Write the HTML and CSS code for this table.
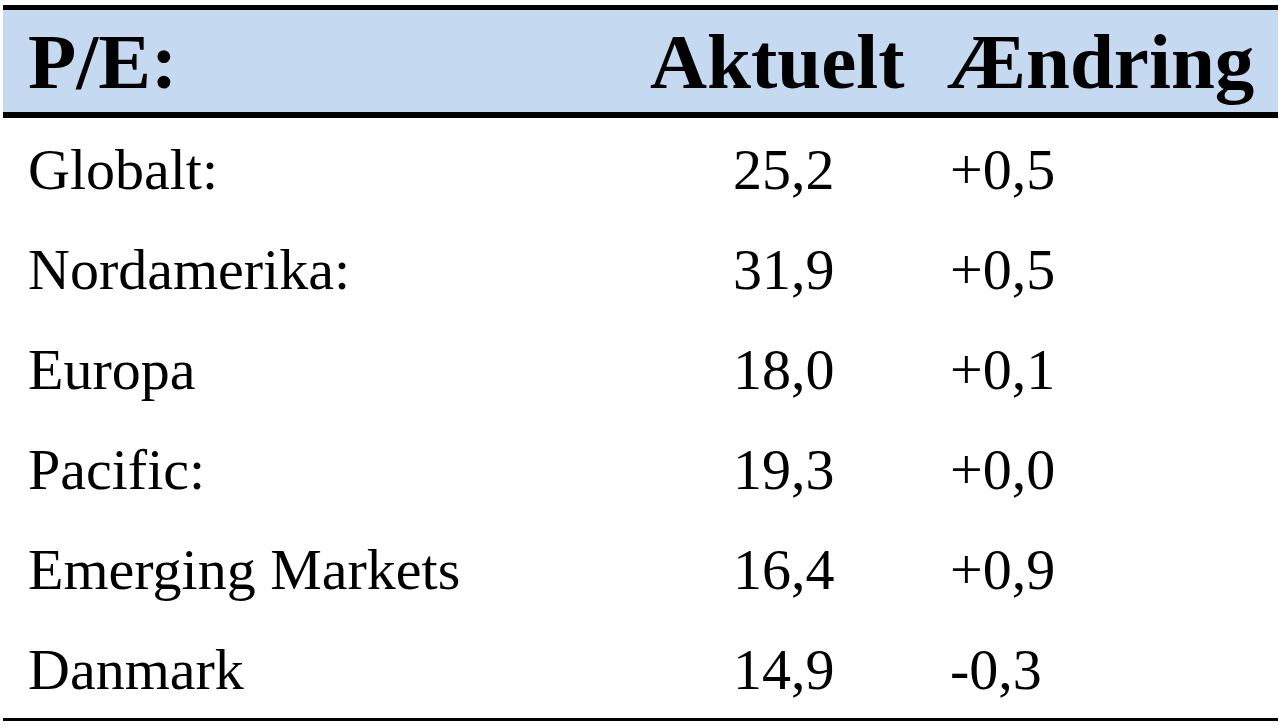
FILE: index.html
```html
<!DOCTYPE html>
<html lang="da">
<head>
<meta charset="utf-8">
<title>P/E</title>
<link rel="stylesheet" href="styles.css">
</head>
<body>
<div class="table">
  <div class="row head">
    <div class="c1">P/E:</div>
    <div class="c2">Aktuelt</div>
    <div class="c3">Ændring</div>
  </div>
  <div class="row"><div class="c1">Globalt:</div><div class="c2 v">25,2</div><div class="c3">+0,5</div></div>
  <div class="row"><div class="c1">Nordamerika:</div><div class="c2 v">31,9</div><div class="c3">+0,5</div></div>
  <div class="row"><div class="c1">Europa</div><div class="c2 v">18,0</div><div class="c3">+0,1</div></div>
  <div class="row"><div class="c1">Pacific:</div><div class="c2 v">19,3</div><div class="c3">+0,0</div></div>
  <div class="row"><div class="c1">Emerging Markets</div><div class="c2 v">16,4</div><div class="c3">+0,9</div></div>
  <div class="row"><div class="c1">Danmark</div><div class="c2 v">14,9</div><div class="c3">-0,3</div></div>
</div>
</body>
</html>
```
FILE: styles.css
```css
html, body {
  margin: 0;
  padding: 0;
  background: #ffffff;
}
body {
  padding: 5px 5px 0 3px;
  font-family: "Liberation Serif", "Times New Roman", serif;
  color: #000;
}
.table {
  width: 1275px;
  border-top: 5px solid #000;
  border-bottom: 3px solid #000;
}
.row {
  display: grid;
  grid-template-columns: 627px 295px 353px;
  box-sizing: border-box;
  height: 100px;
  padding-top: 4px;
  align-items: center;
  font-size: 58px;
  line-height: 1;
}
.head {
  height: 108px;
  padding-top: 0;
  background: #c5d9f1;
  border-bottom: 6px solid #000;
  font-weight: bold;
  font-size: 79px;
}
.c1 { padding-left: 25px; }
.c2 { padding-left: 20px; }
.c2.v { padding-left: 103px; }
.c3 { padding-left: 22px; }
.row:not(.head) .c3 { padding-left: 25px; }
```
